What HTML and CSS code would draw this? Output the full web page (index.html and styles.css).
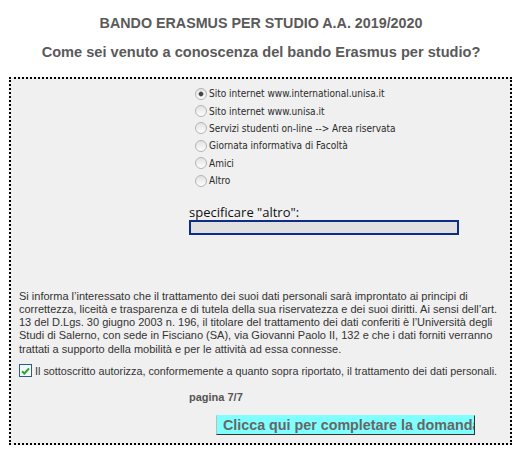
FILE: index.html
```html
<!DOCTYPE html>
<html lang="it">
<head>
<meta charset="utf-8">
<title>Bando Erasmus per studio</title>
<link rel="stylesheet" href="styles.css">
</head>
<body>
<h1 class="title">BANDO ERASMUS PER STUDIO A.A. 2019/2020</h1>
<h2 class="question">Come sei venuto a conoscenza del bando Erasmus per studio?</h2>
<form class="panel">
  <div class="choices">
    <label class="choice"><input class="radio" type="radio" name="fonte" checked><span>Sito internet www.international.unisa.it</span></label>
    <label class="choice"><input class="radio" type="radio" name="fonte"><span>Sito internet www.unisa.it</span></label>
    <label class="choice"><input class="radio" type="radio" name="fonte"><span>Servizi studenti on-line --&gt; Area riservata</span></label>
    <label class="choice"><input class="radio" type="radio" name="fonte"><span>Giornata informativa di Facoltà</span></label>
    <label class="choice"><input class="radio" type="radio" name="fonte"><span>Amici</span></label>
    <label class="choice"><input class="radio" type="radio" name="fonte"><span>Altro</span></label>
  </div>
  <div class="other">
    <label class="other-label" for="altro">specificare "altro":</label>
    <input id="altro" class="other-input" type="text">
  </div>
  <p class="privacy">Si informa l’interessato che il trattamento dei suoi dati personali sarà improntato ai principi di correttezza, liceità e trasparenza e di tutela della sua riservatezza e dei suoi diritti. Ai sensi dell’art. 13 del D.Lgs. 30 giugno 2003 n. 196, il titolare del trattamento dei dati conferiti è l’Università degli Studi di Salerno, con sede in Fisciano (SA), via Giovanni Paolo II, 132 e che i dati forniti verranno trattati a supporto della mobilità e per le attività ad essa connesse.</p>
  <label class="consent"><span class="check"><svg width="9" height="8" viewBox="0 0 9 8"><path d="M1 4.2 L3.4 6.5 L8 1.3" fill="none" stroke="#2aa52a" stroke-width="2"/></svg></span>Il sottoscritto autorizza, conformemente a quanto sopra riportato, il trattamento dei dati personali.</label>
  <p class="page-num">pagina 7/7</p>
  <div class="actions"><button class="submit" type="button">Clicca qui per completare la domanda</button></div>
</form>
</body>
</html>
```
FILE: styles.css
```css
html, body {
  margin: 0;
  padding: 0;
  background: #ffffff;
}
body {
  width: 522px;
  font-family: "Liberation Sans", Arial, sans-serif;
  color: #333;
}
.title {
  margin: 15px 0 0;
  font-size: 14.3px;
  line-height: 16px;
  font-weight: bold;
  color: #5a5a5a;
  text-align: center;
}
.question {
  margin: 13px 0 0;
  font-size: 14.6px;
  line-height: 17px;
  font-weight: bold;
  color: #5a5a5a;
  text-align: center;
}
.panel {
  margin: 16px 10px 0 9px;
  border: 2px dotted #000;
  background: #f0f0f0;
  padding: 6px 0 8px;
}
.choices {
  display: flex;
  flex-direction: column;
  padding-left: 184px;
}
.choice {
  display: flex;
  align-items: center;
  height: 17.4px;
  font-family: "DejaVu Sans Condensed", "DejaVu Sans", sans-serif;
  font-stretch: condensed;
  font-size: 10px;
  color: #2a2a2a;
}
.radio {
  appearance: none;
  -webkit-appearance: none;
  width: 12px;
  height: 12px;
  margin: 0 2px 0 0;
  border: 1px solid #b4b4b4;
  border-radius: 50%;
  background: linear-gradient(#e2e2e2, #fdfdfd);
  box-sizing: border-box;
}
.radio:checked {
  background: radial-gradient(circle, #444 0 1.7px, #999 2.3px, transparent 2.9px), linear-gradient(#e2e2e2, #fdfdfd);
}
.other {
  display: flex;
  flex-direction: column;
  align-items: flex-start;
  margin-top: 16px;
  padding-left: 178px;
}
.other-label {
  font-family: "Open Sans", sans-serif;
  font-size: 13px;
  line-height: 14.5px;
  color: #111;
}
.other-input {
  width: 270px;
  height: 15px;
  box-sizing: border-box;
  margin: 0;
  border: 2px solid #0c2d86;
  background: #e0e0e0;
  padding: 0;
}
.privacy {
  margin: 55px 0 0;
  padding: 0 2px 0 8px;
  font-size: 11px;
  line-height: 13.2px;
  color: #333;
}
.consent {
  display: flex;
  align-items: center;
  height: 16px;
  margin-top: 7px;
  padding-left: 8px;
  font-size: 10.8px;
  color: #333;
}
.check {
  display: flex;
  align-items: center;
  justify-content: center;
  width: 13px;
  height: 13px;
  box-sizing: border-box;
  margin-right: 3px;
  border: 1px solid #2a5c8e;
  background: #f4f8fc;
}
.page-num {
  margin: 11px 0 0;
  padding-left: 178px;
  font-size: 11px;
  line-height: 14px;
  font-weight: bold;
  color: #555;
}
.actions {
  margin-top: 11px;
  padding-left: 205px;
}
.submit {
  display: block;
  width: 259px;
  height: 20px;
  box-sizing: border-box;
  margin: 0;
  padding: 0 0 0 6px;
  overflow: hidden;
  white-space: nowrap;
  text-align: left;
  font-family: "Liberation Sans", Arial, sans-serif;
  font-size: 14.3px;
  line-height: 18px;
  font-weight: bold;
  color: #666;
  background: #80ffff;
  border-style: solid;
  border-width: 1px;
  border-color: #80ffff #333 #333 #bdbdbd;
}
```
